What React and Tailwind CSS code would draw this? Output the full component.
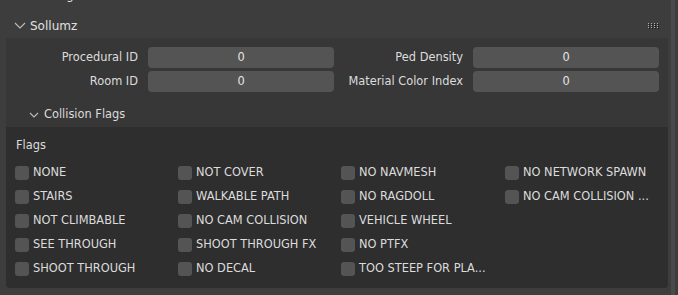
import React from "react";

const font = { fontFamily: '"DejaVu Sans", "Liberation Sans", sans-serif' };

function Chevron({ w = 10, h = 5 }) {
  return (
    <svg width={w + 2} height={h + 2} viewBox={`0 0 ${w + 2} ${h + 2}`} className="block">
      <polyline
        points={`1,1 ${(w + 2) / 2},${h + 1} ${w + 1},1`}
        fill="none"
        stroke="#bdbdbd"
        strokeWidth="1.1"
      />
    </svg>
  );
}

function Handle() {
  const dots = [];
  for (let r = 0; r < 3; r++)
    for (let c = 0; c < 4; c++) {
      dots.push(<rect key={`l${r}${c}`} x={c * 3} y={r * 2} width="1" height="1" fill="#b0b0b0" />);
      dots.push(<rect key={`d${r}${c}`} x={c * 3 + 1} y={r * 2 + 1} width="1" height="1" fill="#1c1c1c" />);
    }
  return (
    <svg width="12" height="6" viewBox="0 0 12 6" className="block">
      {dots}
    </svg>
  );
}

function Field({ label }) {
  return (
    <div className="flex items-center">
      <div className="flex-1 text-right pr-[10px] text-[11.4px] text-[#dcdcdc] whitespace-nowrap">{label}</div>
      <div className="w-[186px] h-[21px] rounded-[4px] bg-[#545454] flex items-center justify-center text-[11.4px] text-[#e6e6e6]">
        0
      </div>
    </div>
  );
}

function Flag({ label }) {
  return (
    <div className="flex items-center h-[24px] gap-[4px]">
      <div className="w-[14px] h-[14px] rounded-[3px] bg-[#545454] shrink-0" />
      <span className="text-[11.4px] text-[#dcdcdc] whitespace-nowrap">{label}</span>
    </div>
  );
}

const flags = [
  ["NONE", "NOT COVER", "NO NAVMESH", "NO NETWORK SPAWN"],
  ["STAIRS", "WALKABLE PATH", "NO RAGDOLL", "NO CAM COLLISION ..."],
  ["NOT CLIMBABLE", "NO CAM COLLISION", "VEHICLE WHEEL", ""],
  ["SEE THROUGH", "SHOOT THROUGH FX", "NO PTFX", ""],
  ["SHOOT THROUGH", "NO DECAL", "TOO STEEP FOR PLA...", ""],
];

export default function App() {
  return (
    <div className="w-[678px] h-[295px] bg-[#3d3d3d] flex overflow-hidden" style={font}>
      <div className="flex-1 flex flex-col">
        <div className="h-[13px] overflow-hidden pl-[31px]">
          <div className="text-[12px] leading-[16px] mt-[-13px] text-[#dcdcdc]">Settings</div>
        </div>
        <div className="h-[25px] flex items-center pl-[14px] pr-[8px]">
          <Chevron />
          <span className="ml-[4px] text-[12px] text-[#e0e0e0]">Sollumz</span>
          <div className="flex-1" />
          <Handle />
        </div>
        <div className="ml-[6px] bg-[#373737] rounded-b-[4px] flex flex-col">
          <div className="px-[9px] pt-[9px] grid grid-cols-2 gap-x-[6px] gap-y-[3px]">
            <Field label="Procedural ID" />
            <Field label="Ped Density" />
            <Field label="Room ID" />
            <Field label="Material Color Index" />
          </div>
          <div className="h-[24px] mt-[11px] flex items-center pl-[23px]">
            <Chevron w={8} h={4} />
            <span className="ml-[5px] text-[11.4px] text-[#dcdcdc]">Collision Flags</span>
          </div>
          <div className="bg-[#2e2e2e] rounded-b-[4px] pt-[9px] pb-[7px] pl-[9px]">
            <div className="h-[19px] flex items-center pl-[1px] text-[11.4px] text-[#dcdcdc]">Flags</div>
            <div className="mt-[6px] grid grid-cols-[163px_163px_164px_1fr]">
              {flags.flat().map((f, i) => (f ? <Flag key={i} label={f} /> : <div key={i} />))}
            </div>
          </div>
        </div>
      </div>
      <div className="w-[10px] flex">
        <div className="ml-[3px] w-[4px] bg-[#4a4a4a]" />
      </div>
    </div>
  );
}
